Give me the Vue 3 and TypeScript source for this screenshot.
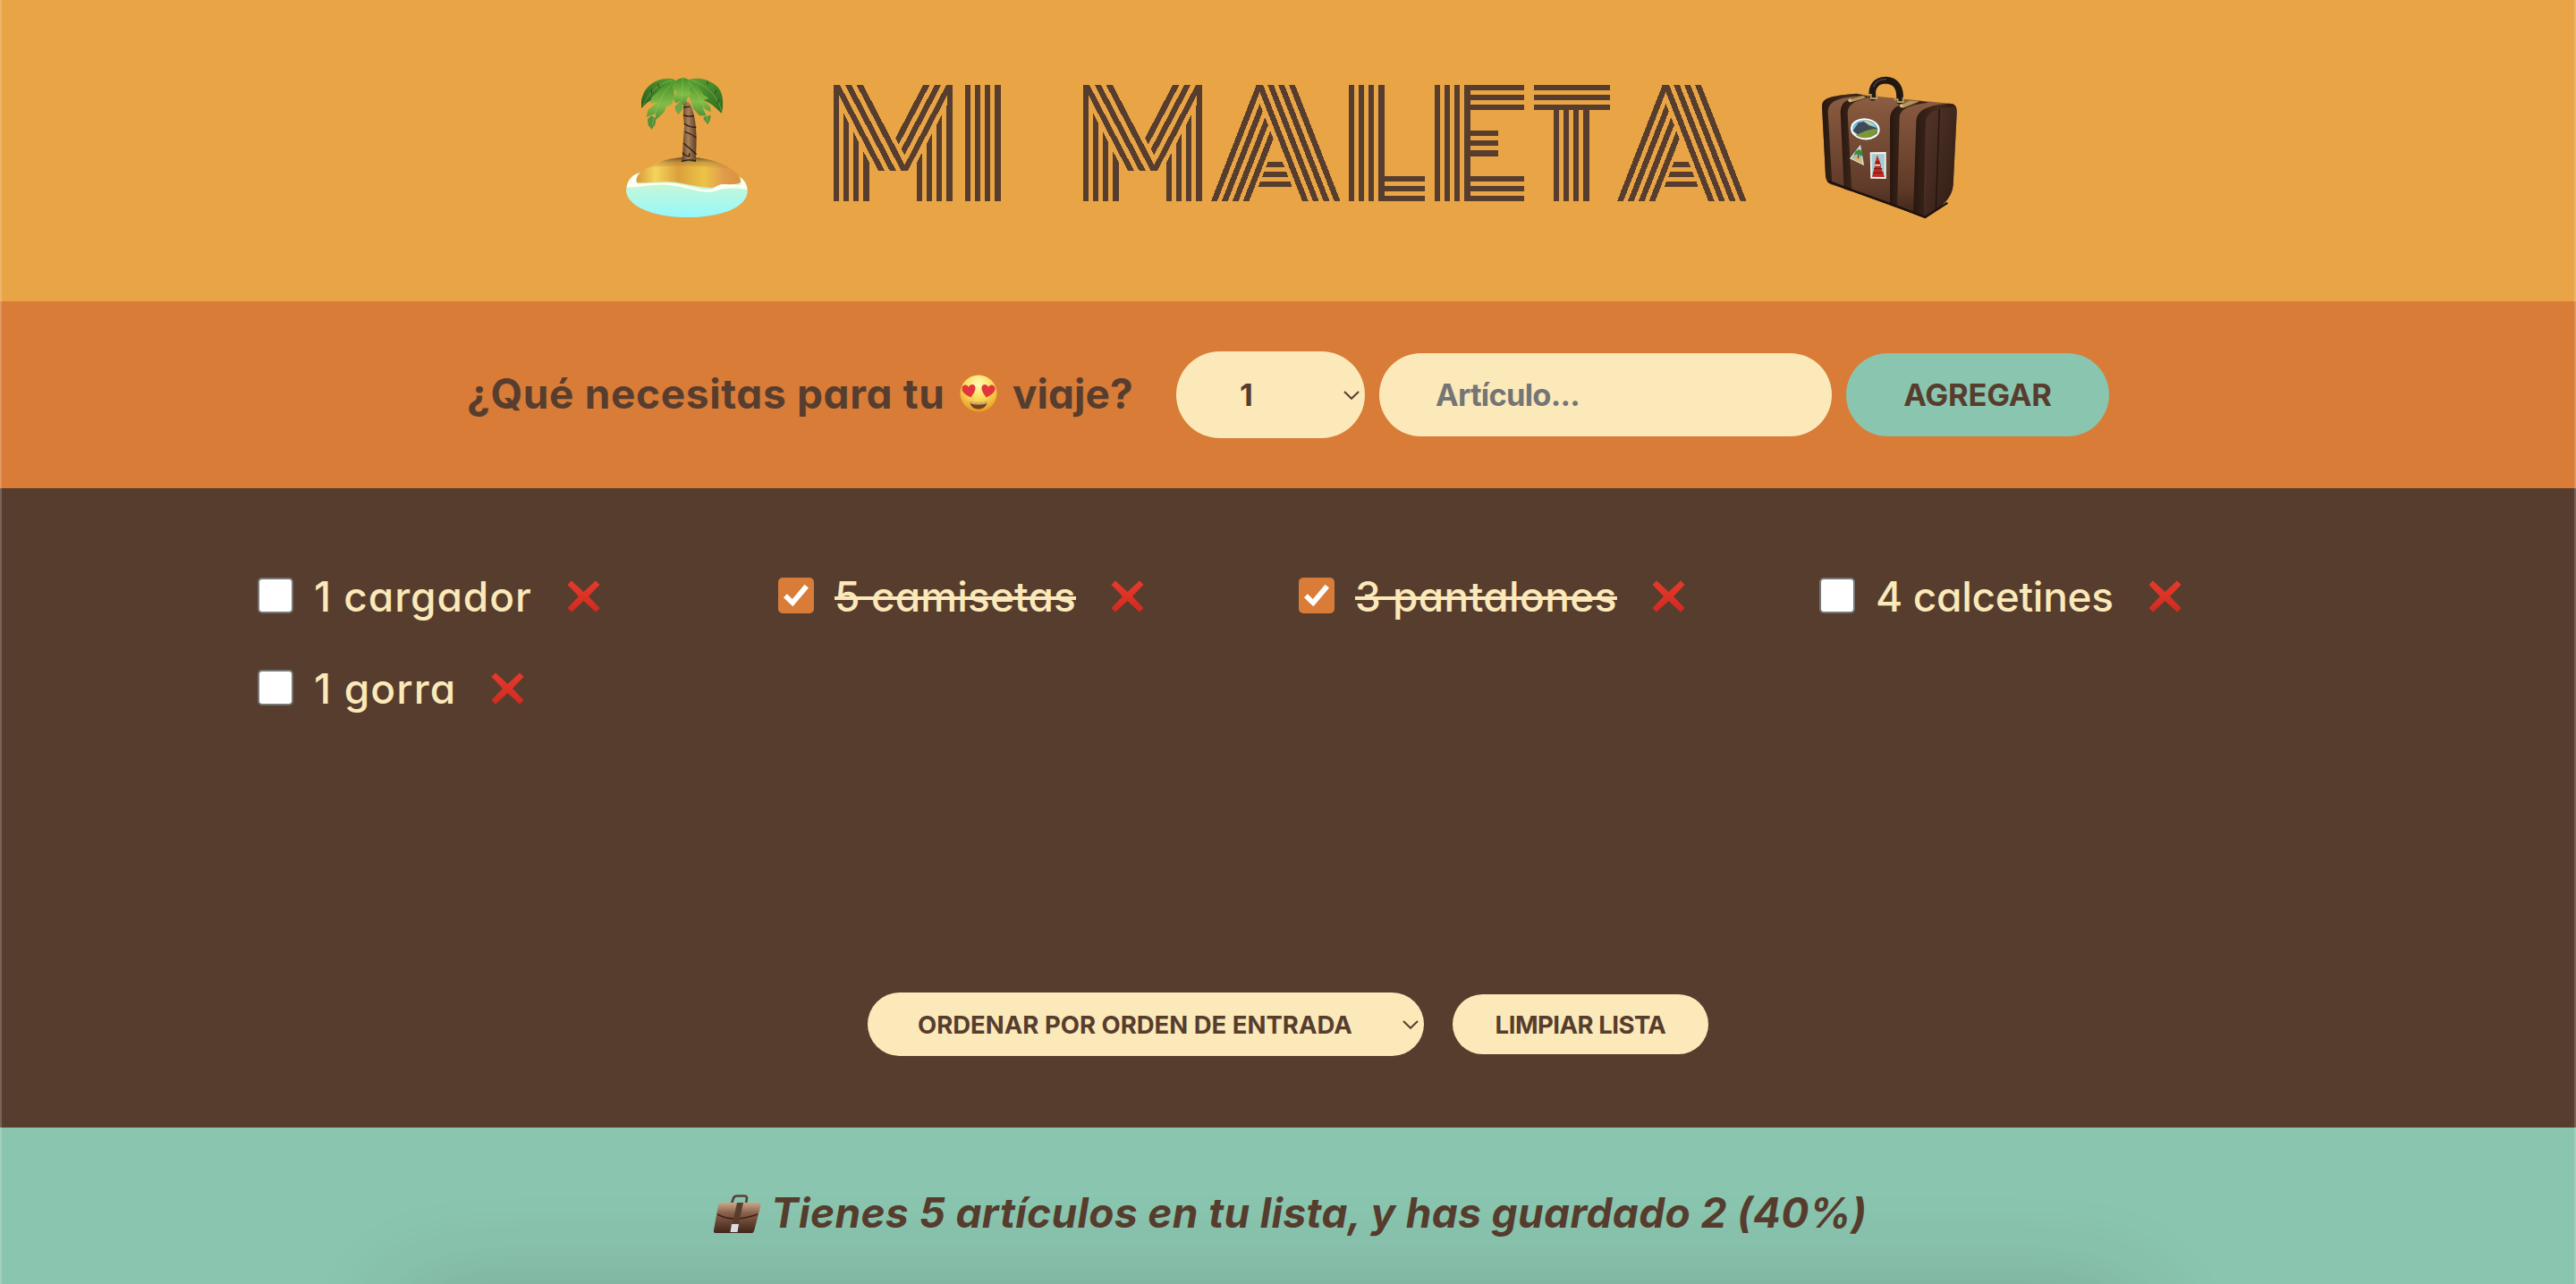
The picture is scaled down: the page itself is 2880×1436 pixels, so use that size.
<script setup lang="ts">
import { computed, ref } from 'vue'

interface Item {
  id: number
  quantity: number
  description: string
  packed: boolean
  tracking: number
}

const items = ref<Item[]>([
  { id: 1, quantity: 1, description: 'cargador', packed: false, tracking: 0.95 },
  { id: 2, quantity: 5, description: 'camisetas', packed: true, tracking: 0.15 },
  { id: 3, quantity: 3, description: 'pantalones', packed: true, tracking: 0.4 },
  { id: 4, quantity: 4, description: 'calcetines', packed: false, tracking: -0.3 },
  { id: 5, quantity: 1, description: 'gorra', packed: false, tracking: 1.15 },
])

const quantity = ref(1)
const description = ref('')
const sortBy = ref('input')

const packedCount = computed(() => items.value.filter((i) => i.packed).length)
const percentage = computed(() => Math.round((packedCount.value / items.value.length) * 100))

const words = ['MI', 'MALETA'].map((w) => w.split(''))

function addItem() {
  if (!description.value) return
  items.value.push({
    id: Date.now(),
    quantity: quantity.value,
    description: description.value,
    packed: false,
    tracking: 0.4,
  })
  description.value = ''
  quantity.value = 1
}

function removeItem(id: number) {
  items.value = items.value.filter((i) => i.id !== id)
}
</script>

<template>
  <div class="app">
    <header class="logo">
      <svg class="palm" viewBox="0 0 540 600" aria-hidden="true">
        <defs>
          <linearGradient id="sea" x1="0" y1="0" x2="0" y2="1">
            <stop offset="0" stop-color="#e2f5cc" />
            <stop offset=".45" stop-color="#b8f8e0" />
            <stop offset="1" stop-color="#96f8fb" />
          </linearGradient>
          <linearGradient id="sand" x1="0" y1="0" x2="1" y2="0">
            <stop offset="0" stop-color="#d99a3a" />
            <stop offset=".18" stop-color="#f6d45c" />
            <stop offset=".4" stop-color="#dba03c" />
            <stop offset=".65" stop-color="#ecc347" />
            <stop offset=".85" stop-color="#e09a4b" />
            <stop offset="1" stop-color="#dc9240" />
          </linearGradient>
          <linearGradient id="sandShade" x1="0" y1="0" x2="0" y2="1">
            <stop offset="0" stop-color="#6a4a2a" />
            <stop offset=".4" stop-color="#9a6e38" stop-opacity=".4" />
            <stop offset="1" stop-color="#c08030" stop-opacity="0" />
          </linearGradient>
          <linearGradient id="trunk" x1="0" y1="0" x2="1" y2="0">
            <stop offset="0" stop-color="#5a3f28" />
            <stop offset=".45" stop-color="#a8805a" />
            <stop offset="1" stop-color="#5b3d27" />
          </linearGradient>
          <linearGradient id="leafA" x1="0" y1="0" x2="0" y2="1">
            <stop offset="0" stop-color="#45902a" />
            <stop offset=".6" stop-color="#83bd47" />
            <stop offset="1" stop-color="#548f36" />
          </linearGradient>
          <linearGradient id="leafB" x1="0" y1="0" x2="1" y2="1">
            <stop offset="0" stop-color="#5fa235" />
            <stop offset="1" stop-color="#2b6a1f" />
          </linearGradient>
          <linearGradient id="leafC" x1="1" y1="0" x2="0" y2="1">
            <stop offset="0" stop-color="#5ba033" />
            <stop offset="1" stop-color="#245c1b" />
          </linearGradient>
        </defs>
        <path d="M60 462C60 430 76 408 104 400L436 410C458 424 468 442 467 464C462 520 370 549 265 549C155 549 66 515 60 462Z" fill="url(#sea)" />
        <path d="M62 448C66 424 82 408 100 402C92 420 90 430 98 436C150 436 200 428 250 440C290 448 330 462 355 452C372 436 400 436 442 441C450 436 446 424 444 416C456 424 466 440 466 456C450 452 420 450 396 452C374 452 360 464 340 464C290 464 250 442 190 440C140 438 90 452 62 448Z" fill="#fffef4" />
        <path d="M96 432C90 410 110 390 160 368C210 344 310 340 360 362C410 380 446 404 444 430C440 442 400 438 380 438C366 440 356 452 340 450C290 448 240 428 190 430C150 432 106 436 96 432Z" fill="url(#sand)" />
        <path d="M130 384C180 352 240 346 280 348C330 348 390 368 420 392C360 376 190 372 130 384Z" fill="url(#sandShade)" />
        <path d="M246 362C252 330 250 290 256 240C252 220 250 200 254 160L272 164C286 190 292 220 294 250C298 290 294 330 294 362Z" fill="url(#trunk)" />
        <path d="M252 180L274 178M252 206Q270 214 288 208M254 234Q276 250 295 246M257 262Q278 268 295 282M252 300Q274 318 296 338M249 332Q262 346 272 344L272 334M246 362Q266 352 294 360" fill="none" stroke="#2c1c12" stroke-width="4" />
        <path d="M222 86C176 74 128 102 116 140C108 158 112 174 112 184C128 162 150 152 176 138C194 124 212 108 226 96Z" fill="url(#leafC)" />
        <path d="M272 86C320 74 370 100 380 134C388 162 384 186 380 200C366 188 350 168 326 160C302 140 282 110 272 86Z" fill="url(#leafB)" />
        <path d="M218 96C194 98 172 122 146 146L140 168L166 162L134 188L128 212L158 202L160 222L188 196L194 178L214 170L222 140Z" fill="url(#leafA)" />
        <path d="M144 208L160 216L158 236L146 254L134 240L132 220Z" fill="#54903c" />
        <path d="M262 90C290 92 306 116 320 138L338 150L318 156L342 176L344 196L316 182L330 208L306 208L284 184L274 150L262 120Z" fill="url(#leafA)" />
        <path d="M320 212L344 206L342 222L334 238L320 220Z" fill="#54923c" />
        <path d="M252 82C228 84 212 98 216 116L230 130L216 146L226 166L240 160L248 174L262 164L266 148L278 138L272 118L284 102C274 88 262 82 252 82Z" fill="url(#leafA)" />
        <path d="M224 178L238 162L250 172L248 188L236 204L226 192Z" fill="#6aa843" />
        <path d="M250 84L246 160M216 96C186 130 160 170 148 240M266 92C296 120 322 170 334 228M212 90C170 100 136 130 116 176M282 90C330 106 366 140 380 192" fill="none" stroke="#a9d56c" stroke-width="2" opacity=".6" />
        <path d="M166 100L172 114M144 118L146 134M332 92L334 104M362 122L358 136M372 150L366 168" stroke="#234d1a" stroke-width="3" />
      </svg>

      <h1 class="title">
        <span v-for="(word, w) in words" :key="w" class="word">
          <span v-for="(ch, i) in word" :key="i" class="glyph" :class="'glyph-' + ch.toLowerCase()">{{ ch }}</span>
        </span>
      </h1>

      <svg class="suitcase" viewBox="0 0 600 600" aria-hidden="true">
        <defs>
          <linearGradient id="front" x1="0" y1="0" x2="0" y2="1">
            <stop offset="0" stop-color="#8d5e42" />
            <stop offset=".3" stop-color="#7a4f37" />
            <stop offset=".75" stop-color="#603b29" />
            <stop offset="1" stop-color="#3a2419" />
          </linearGradient>
          <linearGradient id="side" x1="0" y1="0" x2="1" y2="1">
            <stop offset="0" stop-color="#54352a" />
            <stop offset="1" stop-color="#2e1b12" />
          </linearGradient>
          <linearGradient id="strap" x1="0" y1="0" x2="1" y2="0">
            <stop offset="0" stop-color="#291810" />
            <stop offset=".6" stop-color="#452b1e" />
            <stop offset="1" stop-color="#2b1a12" />
          </linearGradient>
          <linearGradient id="sky" x1="0" y1="0" x2="0" y2="1">
            <stop offset="0" stop-color="#4fa7d8" />
            <stop offset="1" stop-color="#b9dce2" />
          </linearGradient>
        </defs>
        <path d="M84 176C86 150 104 142 200 134L250 142L520 168C532 172 537 180 536 200L524 440C520 480 500 500 430 552L350 522L190 464L112 438C102 432 98 424 96 410Z" fill="url(#front)" />
        <path d="M430 230C434 200 450 184 520 168C534 172 537 182 536 200L524 440C518 484 500 502 430 552Z" fill="url(#side)" />
        <path d="M478 182L466 526" stroke="#20130c" stroke-width="4" />
        <path d="M84 176C86 150 104 142 200 134L224 140C140 148 106 156 104 196L118 438L104 430C98 424 97 416 96 410Z" fill="url(#strap)" />
        <path d="M146 196C148 168 160 156 186 152L226 142L244 146C190 160 172 170 170 200L184 462L158 454Z" fill="url(#strap)" />
        <path d="M312 216C316 186 330 176 366 166L410 158L442 164C380 172 346 184 344 214L336 516L350 522L312 508Z" fill="url(#strap)" />
        <path d="M400 230C402 200 416 184 470 172L510 167C524 168 532 174 530 178C450 184 434 204 432 236L426 550L390 536Z" fill="url(#strap)" />
        <path d="M104 428L190 460L350 518L430 549L505 500" fill="none" stroke="#1b110c" stroke-width="7" />
        <path d="M254 146C248 112 264 90 299 89C334 92 348 114 345 158" fill="none" stroke="#211713" stroke-width="23" stroke-linecap="round" />
        <path d="M256 112C264 94 280 85 300 86" fill="none" stroke="#5a4b43" stroke-width="4" />
        <path d="M172 156L222 142L232 148L184 162ZM342 176L378 158L412 160L356 182Z" fill="#b49758" />
        <path d="M240 138h8v12h20v-14M326 154h12v8h18v-16" fill="none" stroke="#b79a5c" stroke-width="6" />
        <circle cx="178" cy="157" r="6" fill="#d2bb80" />
        <circle cx="351" cy="175" r="6" fill="#d2bb80" />
        <g transform="rotate(5 229 253)">
          <ellipse cx="229" cy="253" rx="49" ry="36" fill="#fff" />
          <ellipse cx="229" cy="253" rx="43" ry="30" fill="url(#sky)" />
          <path d="M188 262L206 232L222 228L240 240L268 246L270 264L250 278L216 280Z" fill="#3d4a58" />
          <path d="M204 234C220 218 250 226 262 240L240 236L222 228Z" fill="#e1cf96" />
          <path d="M200 276C230 258 252 248 271 250C270 268 252 282 229 283C216 283 206 280 200 276Z" fill="#7d9636" />
        </g>
        <path d="M213 306L225 375L177 352Z" fill="#e4efe9" />
        <path d="M211 314L221 370L182 351Z" fill="#7cc4dc" />
        <path d="M186 352C198 342 212 344 218 358L220 368Z" fill="#e9b45c" />
        <path d="M205 352L207 332" stroke="#6b4425" stroke-width="4" />
        <path d="M192 342C194 322 208 318 218 326C222 334 220 344 214 344C210 336 202 336 192 342Z" fill="#3e8a35" />
        <path d="M245 331L299 330L299 420L247 419Z" fill="#f7f5ee" />
        <path d="M250 337L294 336L294 414L252 413Z" fill="#a8ccd0" />
        <path d="M269 340L277 360L282 382L294 414L252 413L260 382L264 360Z" fill="#bd2b20" />
        <path d="M260 372h22M258 386h28M256 400h34M262 364h16" stroke="#6e1610" stroke-width="3" />
        <path d="M261 374h18" stroke="#fff" stroke-width="4" />
      </svg>
    </header>

    <form class="add-form" @submit.prevent="addItem">
      <h3 class="question">
        <span class="q-text">¿Qué necesitas para tu</span>
        <svg class="face" viewBox="0 0 42 42" aria-hidden="true">
          <defs>
            <radialGradient id="skin" cx=".5" cy=".25" r=".78">
              <stop offset="0" stop-color="#fffbb8" />
              <stop offset=".5" stop-color="#fbdc58" />
              <stop offset="1" stop-color="#e6921c" />
            </radialGradient>
          </defs>
          <circle cx="21" cy="21" r="20.5" fill="url(#skin)" />
          <path d="M11 30Q21 33.500 31 30C30 36 26 38.500 21 38.500S12 36 11 30Z" fill="#77431a" />
          <path d="M11 30Q21 33.500 31 30L30.600 32Q21 35 11.400 32Z" fill="#e8c9a0" opacity=".8" />
          <path d="M12.500 25.500C6 22.500 2 19 2.500 15C3 11 8 10 10 14C12 9.500 17.500 10.500 17.500 15C17.500 19 14.500 22 12.500 25.500Z" fill="#e2363c" />
          <path d="M29.500 25.500C36 22.500 40 19 39.500 15C39 11 34 10 32 14C30 9.500 24.500 10.500 24.500 15C24.500 19 27.500 22 29.500 25.500Z" fill="#e2363c" />
        </svg>
        <span class="q-end">viaje?</span>
      </h3>
      <div class="select-wrap">
        <select v-model.number="quantity" class="qty">
          <option v-for="n in 20" :key="n" :value="n">{{ n }}</option>
        </select>
        <svg class="chevron" viewBox="0 0 18 10"><path d="M1 1L9 8.800L17 1" /></svg>
      </div>
      <input v-model="description" class="article" type="text" placeholder="Artículo..." />
      <button class="add">AGREGAR</button>
    </form>

    <section class="list">
      <ul class="items">
        <li v-for="item in items" :key="item.id" class="item">
          <input v-model="item.packed" type="checkbox" class="check" />
          <span class="label" :class="{ packed: item.packed }" :style="{ letterSpacing: item.tracking + 'px' }">{{ item.quantity }} {{ item.description }}</span>
          <button class="remove" aria-label="Eliminar" @click="removeItem(item.id)">
            <svg viewBox="0 0 37 36" aria-hidden="true">
              <defs>
                <linearGradient id="cross" x1="0" y1="0" x2="0" y2="1">
                  <stop offset="0" stop-color="#e63a2c" />
                  <stop offset="1" stop-color="#d22a20" />
                </linearGradient>
              </defs>
              <path d="M5 .5L18.500 13L32 .5L36.500 5L24 18L36.500 31L32 35.500L18.500 23L5 35.500L.5 31L13 18L.5 5Z" />
            </svg>
          </button>
        </li>
      </ul>
      <div class="actions">
        <div class="select-wrap">
          <select v-model="sortBy" class="sort">
            <option value="input">ORDENAR POR ORDEN DE ENTRADA</option>
            <option value="description">ORDENAR POR DESCRIPCIÓN</option>
            <option value="packed">ORDENAR POR ESTADO</option>
          </select>
          <svg class="chevron" viewBox="0 0 18 10"><path d="M1 1L9 8.800L17 1" /></svg>
        </div>
        <button class="clear" @click="items = []">LIMPIAR LISTA</button>
      </div>
    </section>

    <footer class="stats">
      <svg class="briefcase" viewBox="0 0 54 44" aria-hidden="true">
        <defs>
          <linearGradient id="hide" x1="0" y1="0" x2="0" y2="1">
            <stop offset="0" stop-color="#c9a88c" />
            <stop offset=".35" stop-color="#8a604a" />
            <stop offset="1" stop-color="#42261b" />
          </linearGradient>
        </defs>
        <path d="M21 10L23 4Q24 1.500 27 1.500H35Q38 1.500 38 4L37 10" fill="none" stroke="#5a4135" stroke-width="2.600" />
        <path d="M9 9H51Q54 9 53.500 12L46 41Q45.500 43 43 43H3Q.5 43 1 40L6 12Q6.500 9 9 9Z" fill="url(#hide)" />
        <path d="M5 22Q22 32 50 22" fill="none" stroke="#3d241a" stroke-width="1.500" />
        <path d="M27 9H34L29 32H22Z" fill="#5b3d2e" />
        <path d="M21 33H29L27.500 42H19.500Z" fill="#e0e0e6" />
      </svg>
      <em class="summary">Tienes {{ items.length }} artículos en tu lista, y has guardado {{ packedCount }} ({{ percentage }}%)</em>
      <div class="dock-shadow"></div>
    </footer>
  </div>
</template>

<style>
html,
body {
  margin: 0;
  background: #5a3e2b;
}
</style>

<style scoped>
.app {
  --dark: #573d2e;
  --amber: #e8a445;
  --cream: #fbe9b9;
  --orange: #d87c38;
  --green: #8ac5af;
  box-sizing: border-box;
  width: 100%;
  height: 1436px;
  overflow: hidden;
  display: grid;
  grid-template-rows: 337px 209px 715px 175px;
  font-family: Inter, 'Noto Sans', sans-serif;
  font-feature-settings: 'cv11';
  color: var(--dark);
  position: relative;
}
.app::after {
  content: '';
  position: absolute;
  inset: 0;
  border: solid rgba(255, 255, 255, 0.2);
  border-width: 0 2px;
  pointer-events: none;
}

.logo {
  box-sizing: border-box;
  background: var(--amber);
  display: flex;
  align-items: flex-start;
  padding: 60px 0 0 680px;
}
.palm {
  width: 180px;
  height: 200px;
}
.suitcase {
  width: 200px;
  height: 200px;
  margin-left: 57px;
}
.title {
  margin: 35px 0 0 72px;
  display: flex;
  gap: 92px;
  font-weight: 900;
  font-size: 179px;
  line-height: 130px;
}
.word {
  display: flex;
}

/* Each letter is painted with parallel stripes clipped to its own shape. */
.glyph {
  display: flex;
  justify-content: center;
  height: 130px;
  color: transparent;
  -webkit-text-stroke: 30px transparent;
  -webkit-background-clip: text;
  background-clip: text;
  background-repeat: no-repeat;
  --bars: linear-gradient(90deg, var(--dark) 6.2px, transparent 6.2px 11.1px, var(--dark) 11.1px 17.300px, transparent 17.300px 22.200px, var(--dark) 22.200px 28.400px, transparent 28.400px 33.300px, var(--dark) 33.300px 39.600px, transparent 39.600px);
  --rows: linear-gradient(180deg, var(--dark) 6px, transparent 6px 11.200px, var(--dark) 11.200px 17.200px, transparent 17.200px 22.400px, var(--dark) 22.400px 28.500px, transparent 28.500px);
}
.glyph-m {
  width: 133px;
  letter-spacing: -34px;
  -webkit-text-stroke-width: 56px;
  background-image:
    linear-gradient(var(--dark), var(--dark)),
    linear-gradient(var(--dark), var(--dark)),
    linear-gradient(117.5deg, transparent 111.7px, var(--dark) 111.7px 117.900px, transparent 117.900px),
    linear-gradient(62.5deg, transparent 39.600px, var(--amber) 39.600px 44.400px, var(--dark) 44.400px 50.600px, var(--amber) 50.600px 55.700px, var(--dark) 55.700px 62px, var(--amber) 62px 67px, var(--dark) 67px 73.500px, var(--amber) 73.500px 78.300px, transparent 78.300px),
    linear-gradient(117.5deg, transparent 84px, var(--amber) 84px 88.800px, var(--dark) 88.800px 95.300px, var(--amber) 95.300px 100.300px, var(--dark) 100.300px 106.600px, var(--amber) 106.600px 111.700px, var(--dark) 111.700px 117.900px, var(--amber) 117.900px 122.700px, transparent 122.700px),
    var(--bars),
    var(--bars);
  background-size: 6px 130px, 6px 130px, 133px 96px, 133px 96px, 133px 96px, 40px 110px, 40px 110px;
  background-position: 0 0, 127px 0, 0 0, 0 0, 0 0, 0 20px, 93.400px 20px;
}
.glyph-i {
  width: 40px;
  margin-left: 14px;
  letter-spacing: -16px;
  -webkit-text-stroke-width: 40px;
  background-image: var(--bars);
}
.glyph-a {
  width: 145px;
  margin-left: 10px;
  background-image:
    linear-gradient(111.3deg, transparent 47.200px, var(--dark) 47.200px 53.600px, transparent 53.600px),
    linear-gradient(68.7deg, transparent 90.300px, var(--amber) 90.300px 95.100px, var(--dark) 95.100px 101.400px, var(--amber) 101.400px 106.200px, var(--dark) 106.200px 112.400px, var(--amber) 112.400px 117.200px, var(--dark) 117.200px 123.500px, var(--amber) 123.500px 128.300px, var(--dark) 128.300px 134.700px, transparent 134.700px),
    linear-gradient(111.3deg, transparent 58.300px, var(--dark) 58.300px 64.600px, var(--amber) 64.600px 69.400px, var(--dark) 69.400px 75.700px, var(--amber) 75.700px 80.400px, var(--dark) 80.400px 86.800px, var(--amber) 86.800px 90.500px, transparent 90.500px),
    var(--rows);
  background-size: 145px 130px, 145px 130px, 145px 130px, 60px 30px;
  background-position: 0 0, 0 0, 0 0, 48px 86px;
}
.glyph-l {
  width: 85px;
  margin-left: 9px;
  letter-spacing: -20px;
  -webkit-text-stroke-width: 48px;
  background-image: var(--bars), var(--rows);
  background-size: 40px 130px, 46px 29px;
  background-position: 0 0, 39px 101.500px;
}
.glyph-e {
  width: 100px;
  margin-left: 11px;
  letter-spacing: -16px;
  -webkit-text-stroke-width: 40px;
  background-image: var(--bars), var(--rows), var(--rows), var(--rows);
  background-size: 40px 130px, 61px 29px, 32px 29px, 61px 29px;
  background-position: 0 0, 39px 0, 39px 51px, 39px 101.500px;
}
.glyph-t {
  width: 85px;
  margin-left: 11px;
  letter-spacing: -38px;
  -webkit-text-stroke-width: 56px;
  background-image: var(--rows), var(--bars);
  background-size: 85px 29px, 40px 102px;
  background-position: 0 0, 22.400px 28px;
}
.glyph-t + .glyph-a {
  margin-left: 8px;
  margin-right: -1px;
}

.add-form {
  background: var(--orange);
  display: flex;
  align-items: center;
  padding-left: 522px;
}
.question {
  margin: 0 50px 3px 0;
  display: flex;
  align-items: center;
  font-size: 46px;
  font-weight: 700;
  line-height: 60px;
  white-space: nowrap;
}
.q-text {
  width: 533px;
  letter-spacing: 0.65px;
}
.face {
  width: 42px;
  height: 42px;
  margin: 0 18px;
}
.q-end {
  letter-spacing: 0;
  width: 133px;
  margin-left: -1px;
}
select,
input,
button {
  font-family: inherit;
  font-feature-settings: inherit;
  color: inherit;
  border: 0;
  margin: 0;
  outline: none;
}
select {
  appearance: none;
}
.select-wrap {
  position: relative;
  display: flex;
}
.chevron {
  position: absolute;
  right: 6px;
  top: 50%;
  width: 18px;
  height: 10px;
  margin-top: -5px;
  fill: none;
  stroke: var(--dark);
  stroke-width: 2;
}
.qty {
  width: 211px;
  height: 97px;
  padding: 0 0 0 71px;
  border-radius: 49px;
  background: var(--cream);
  font-size: 34.500px;
  font-weight: 700;
}
.article {
  box-sizing: border-box;
  width: 506px;
  height: 93px;
  margin-left: 16px;
  padding: 0 63px;
  border-radius: 47px;
  background: var(--cream);
  font-size: 34.500px;
  font-weight: 700;
  letter-spacing: -0.75px;
}
.article::placeholder {
  color: #757575;
  opacity: 1;
}
.add {
  width: 294px;
  height: 93px;
  margin-left: 16px;
  padding: 0;
  border-radius: 47px;
  background: var(--green);
  font-size: 34.500px;
  font-weight: 700;
  letter-spacing: -0.2px;
}

.list {
  box-sizing: border-box;
  background: var(--dark);
  color: var(--cream);
  display: flex;
  flex-direction: column;
  justify-content: space-between;
  padding: 91px 264px 80px 288px;
}
.items {
  list-style: none;
  margin: 0;
  padding: 0;
  display: grid;
  grid-template-columns: repeat(4, 582px);
  grid-auto-rows: 60px;
  row-gap: 43px;
}
.item {
  display: flex;
  align-items: center;
  font-size: 46px;
  font-weight: 500;
  line-height: 60px;
  white-space: nowrap;
}
.check {
  appearance: none;
  box-sizing: border-box;
  width: 40px;
  height: 40px;
  margin: 0 23px 2px 0;
  border: 2px solid #767676;
  border-radius: 5px;
  background: #fff;
  display: grid;
  place-items: center;
}
.check:checked {
  border-color: var(--orange);
  background: var(--orange);
}
.check:checked::before {
  content: '';
  width: 28px;
  height: 28px;
  background: #fff;
  clip-path: polygon(0 58%, 14% 44%, 35% 64%, 84% 6%, 100% 20%, 37% 94%);
}
.packed {
  text-decoration: line-through;
  text-decoration-thickness: 4px;
}
.remove {
  display: flex;
  margin-left: 39px;
  padding: 0;
  background: none;
}
.remove svg {
  width: 37px;
  height: 36px;
  fill: url(#cross);
}
.actions {
  display: flex;
  align-items: center;
  gap: 32px;
  margin-left: 682px;
  color: var(--dark);
}
.sort {
  box-sizing: border-box;
  width: 622px;
  height: 71px;
  padding: 0 0 0 56px;
  border-radius: 36px;
  background: var(--cream);
  font-size: 27.500px;
  font-weight: 700;
  letter-spacing: 0;
}
.clear {
  width: 286px;
  height: 67px;
  padding: 0;
  border-radius: 34px;
  background: var(--cream);
  font-size: 27.500px;
  font-weight: 700;
  letter-spacing: -0.5px;
}

.stats {
  position: relative;
  box-sizing: border-box;
  background: var(--green);
  display: flex;
  align-items: flex-start;
  padding: 65px 0 0 797px;
}
.briefcase {
  width: 54px;
  height: 44px;
  margin: 10px 11px 0 0;
}
.summary {
  font-size: 46px;
  font-weight: 700;
  line-height: 60px;
  letter-spacing: 0.38px;
  white-space: nowrap;
}
.dock-shadow {
  position: absolute;
  top: 198px;
  left: 460px;
  right: 500px;
  height: 200px;
  border-radius: 40px;
  box-shadow: 0 0 110px 10px rgba(40, 40, 40, 0.22);
}
</style>
